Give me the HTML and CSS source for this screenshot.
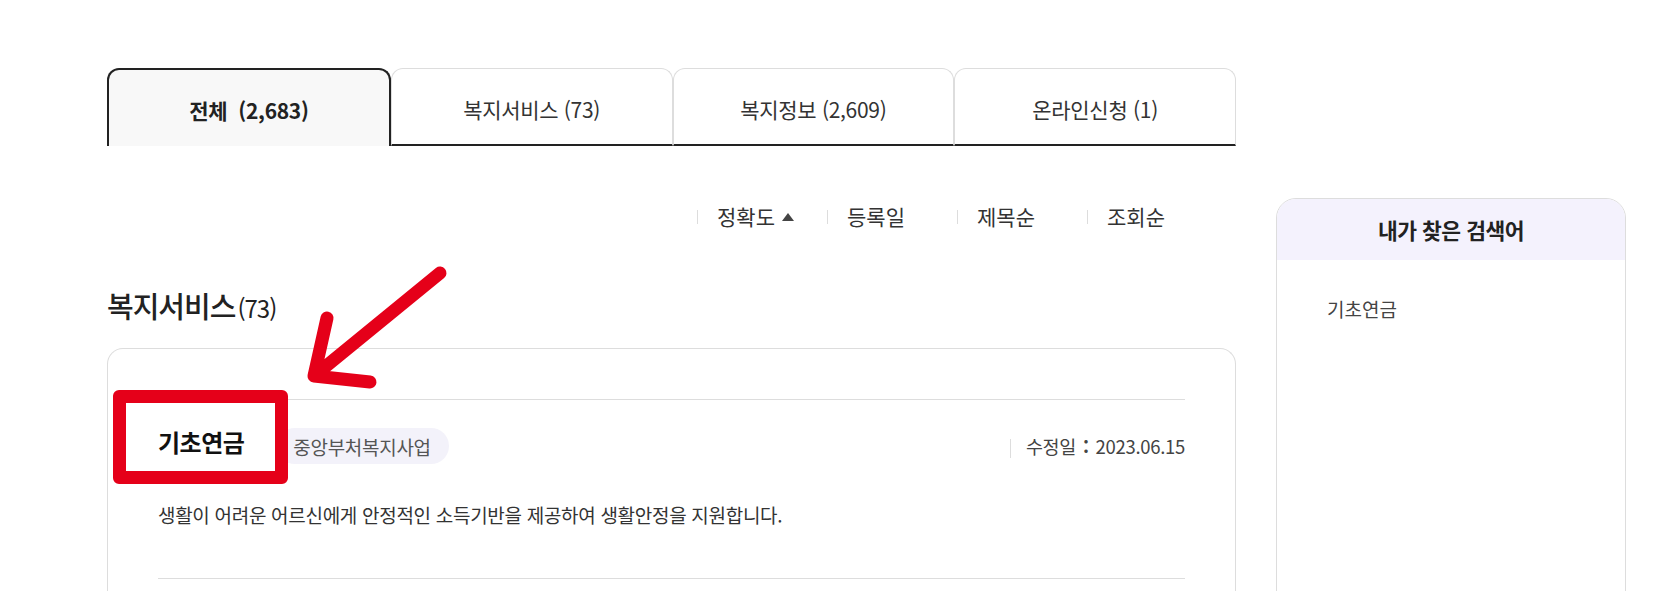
FILE: index.html
```html
<!DOCTYPE html>
<html lang="ko">
<head>
    <meta charset="UTF-8">
    <meta name="viewport" content="width=device-width, initial-scale=1.0">
    <title>통합검색 결과</title>
    <link rel="stylesheet" href="styles.css">
</head>
<body>

<div class="wrap">
    <div class="main">
        <ul class="tabs">
            <li class="tab active">전체&nbsp;&nbsp;(2,683)</li>
            <li class="tab">복지서비스 (73)</li>
            <li class="tab">복지정보 (2,609)</li>
            <li class="tab">온라인신청 (1)</li>
        </ul>

        <ul class="sort">
            <li class="sort-item on">정확도 <span class="tri"></span></li>
            <li class="sort-item">등록일</li>
            <li class="sort-item">제목순</li>
            <li class="sort-item">조회순</li>
        </ul>

        <h2 class="section-title">복지서비스<span class="count">(73)</span></h2>

        <div class="card">
            <div class="item">
                <div class="item-head">
                    <strong class="item-title">기초연금</strong>
                    <span class="badge">중앙부처복지사업</span>
                    <span class="date">수정일 <b>:</b> 2023.06.15</span>
                </div>
                <p class="desc">생활이 어려운 어르신에게 안정적인 소득기반을 제공하여 생활안정을 지원합니다.</p>
            </div>
            <div class="item"></div>
        </div>
    </div>

    <aside class="side">
        <div class="side-head">내가 찾은 검색어</div>
        <ul class="side-list">
            <li>기초연금</li>
        </ul>
    </aside>
</div>

<!-- annotation marks -->
<div class="mark-box"></div>
<svg class="mark-arrow" width="1678" height="591" viewBox="0 0 1678 591">
    <path d="M440 273 L314 376 M327 318 L314 376 L370 382" fill="none" stroke="#e50019" stroke-width="13" stroke-linecap="round" stroke-linejoin="round"/>
</svg>

</body>
</html>
```

FILE: styles.css
```css
/* Global */
* {
    box-sizing: border-box;
}

body {
    margin: 0;
    background: #ffffff;
    color: #333333;
    font-family: "Noto Sans CJK KR", "Noto Sans", sans-serif;
    overflow: hidden;
}

ul {
    list-style: none;
    margin: 0;
    padding: 0;
}

.wrap {
    display: flex;
    align-items: flex-start;
    gap: 40px;
    padding: 68px 0 0 107px;
}

.main {
    width: 1129px;
}

/* Tabs */
.tabs {
    display: flex;
    height: 78px;
}

.tab {
    flex: 1;
    display: flex;
    align-items: center;
    justify-content: center;
    padding-top: 4px;
    background: #ffffff;
    border: 1px solid #dddddd;
    border-bottom: 2px solid #222222;
    border-radius: 12px 12px 0 0;
    font-size: 21px;
    letter-spacing: -0.3px;
    color: #333333;
}

.tab.active {
    background: #f8f8f8;
    border: 2px solid #222222;
    border-bottom: 0;
    font-weight: 700;
    color: #222222;
}

/* Sort */
.sort {
    display: flex;
    justify-content: flex-end;
    padding-right: 19px;
    margin-top: 55px;
}

.sort-item {
    position: relative;
    width: 130px;
    padding-left: 20px;
    font-size: 21px;
    line-height: 30px;
    color: #333333;
}

.sort-item::before {
    content: "";
    position: absolute;
    left: 0;
    top: 9px;
    width: 1px;
    height: 14px;
    background: #dddddd;
}

.tri {
    display: inline-block;
    vertical-align: 4px;
    margin-left: 1px;
    border-left: 6px solid transparent;
    border-right: 6px solid transparent;
    border-bottom: 8px solid #444444;
}

/* Section */
.section-title {
    margin: 54px 0 0;
    font-size: 29px;
    font-weight: 500;
    letter-spacing: -1px;
    line-height: 40px;
    color: #222222;
}

.count {
    margin-left: 2px;
    font-size: 24px;
    font-weight: 400;
}

.card {
    margin-top: 20px;
    padding: 50px 50px 0;
    height: 300px;
    border: 1px solid #dddddd;
    border-bottom: 0;
    border-radius: 16px 16px 0 0;
}

.item {
    height: 179px;
    padding-top: 28px;
    border-top: 1px solid #dddddd;
}

.item-head {
    display: flex;
    align-items: center;
}

.item-title {
    margin: 0 33px 8px 0;
    font-size: 24px;
    line-height: 28px;
    font-weight: 700;
    letter-spacing: -0.5px;
    color: #111111;
}

.badge {
    display: flex;
    align-items: center;
    height: 36px;
    padding: 0 18px 0 16px;
    border-radius: 18px;
    background: #f3f2fa;
    font-size: 19px;
    letter-spacing: -0.3px;
    color: #555555;
}

.date {
    position: relative;
    margin-left: auto;
    padding-left: 16px;
    font-size: 18.5px;
    letter-spacing: -0.3px;
    color: #444444;
}

.date::before {
    content: "";
    position: absolute;
    left: 0;
    top: 6px;
    width: 1px;
    height: 19px;
    background: #dddddd;
}

.date b {
    margin: 0 2px;
}

.desc {
    margin: 37px 0 0;
    font-size: 19px;
    letter-spacing: -0.3px;
    color: #333333;
}

/* Side box */
.side {
    width: 350px;
    height: 500px;
    margin-top: 130px;
    border: 1px solid #dddddd;
    border-radius: 20px 20px 0 0;
    overflow: hidden;
}

.side-head {
    height: 61px;
    display: flex;
    align-items: center;
    justify-content: center;
    background: #f4f2fd;
    font-size: 21.5px;
    font-weight: 700;
    letter-spacing: -0.5px;
    color: #222222;
}

.side-list {
    padding: 35px 50px;
}

.side-list li {
    font-size: 19px;
    color: #444444;
}

/* Annotation marks over the page */
.mark-box {
    position: absolute;
    left: 113px;
    top: 390px;
    width: 175px;
    height: 94px;
    border: 13px solid #e50019;
    border-radius: 6px;
}

.mark-arrow {
    position: absolute;
    left: 0;
    top: 0;
    pointer-events: none;
}
```
